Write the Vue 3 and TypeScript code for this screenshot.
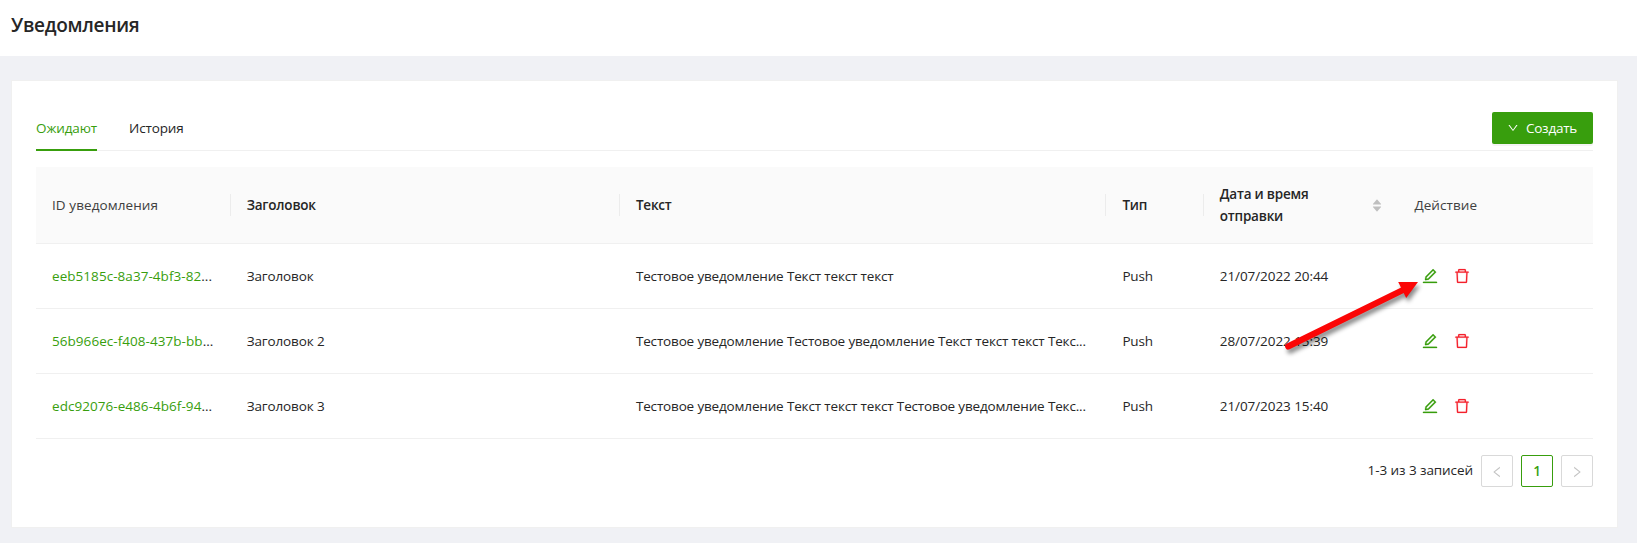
<script setup lang="ts">
interface Notice {
  id: string
  title: string
  text: string
  cut: boolean
  type: string
  date: string
}

const rows: Notice[] = [
  { id: 'eeb5185c-8a37-4bf3-82', title: 'Заголовок', text: 'Тестовое уведомление Текст текст текст', cut: false, type: 'Push', date: '21/07/2022 20:44' },
  { id: '56b966ec-f408-437b-bb', title: 'Заголовок 2', text: 'Тестовое уведомление Тестовое уведомление Текст текст текст Текс', cut: true, type: 'Push', date: '28/07/2022 15:39' },
  { id: 'edc92076-e486-4b6f-94', title: 'Заголовок 3', text: 'Тестовое уведомление Текст текст текст Тестовое уведомление Текс', cut: true, type: 'Push', date: '21/07/2023 15:40' },
]

const icons = {
  edit: 'M257.7 752c2 0 4-.2 6-.5L431.9 722c2-.4 3.9-1.3 5.3-2.8l423.9-423.9a9.96 9.96 0 000-14.1L694.9 114.9c-1.9-1.9-4.4-2.9-7.1-2.9s-5.2 1-7.1 2.9L256.8 538.8c-1.5 1.5-2.4 3.3-2.8 5.3l-29.5 168.2a33.5 33.5 0 009.4 29.8c6.6 6.4 14.9 9.9 23.8 9.9zm67.4-174.4L687.8 215l73.3 73.3-362.7 362.6-88.9 15.7 15.6-89zM880 836H144c-17.7 0-32 14.3-32 32v36c0 4.4 3.6 8 8 8h784c4.4 0 8-3.6 8-8v-36c0-17.7-14.3-32-32-32z',
  trash: 'M360 184h-8c4.4 0 8-3.6 8-8v8h304v-8c0 4.4 3.6 8 8 8h-8v72h72v-80c0-35.3-28.7-64-64-64H352c-35.3 0-64 28.7-64 64v80h72v-72zm504 72H160c-17.7 0-32 14.3-32 32v32c0 4.4 3.6 8 8 8h60.4l24.7 523c1.6 34.1 29.8 61 63.9 61h454c34.2 0 62.3-26.8 63.9-61l24.7-523H888c4.4 0 8-3.6 8-8v-32c0-17.7-14.3-32-32-32zM731.3 840H292.7l-24.2-512h487l-24.2 512z',
  down: 'M884 256h-75c-5.1 0-9.9 2.5-12.9 6.6L512 654.2 227.9 262.6c-3-4.1-7.8-6.6-12.9-6.6h-75c-6.5 0-10.3 7.4-6.5 12.7l352.6 486.1c12.8 17.6 39 17.6 51.7 0l352.6-486.1c3.9-5.3.1-12.7-6.4-12.7z',
  left: 'M724 218.3V141c0-6.7-7.7-10.4-12.9-6.3L260.3 486.8a31.86 31.86 0 000 50.3l450.8 352.1c5.3 4.1 12.9.4 12.9-6.3v-77.3c0-4.9-2.3-9.6-6.1-12.6l-360-281 360-281.1c3.8-3 6.1-7.7 6.1-12.6z',
  right: 'M765.7 486.8L314.9 134.7A7.97 7.97 0 00302 141v77.3c0 4.9 2.3 9.6 6.1 12.6l360 281.1-360 281.1c-3.9 3-6.1 7.7-6.1 12.6V883c0 6.7 7.7 10.4 12.9 6.3l450.8-352.1a31.96 31.96 0 000-50.4z',
  caretUp: 'M858.9 689L530.5 308.2c-9.4-10.9-27.5-10.9-37 0L165.1 689c-12.2 14.2-1.2 35 18.5 35h656.8c19.7 0 30.7-20.8 18.5-35z',
  caretDown: 'M840.4 300H183.6c-19.7 0-30.7 20.8-18.5 35l328.4 380.8c9.4 10.9 27.5 10.9 37 0L858.9 335c12.2-14.2 1.2-35-18.5-35z',
}
</script>

<template>
  <div class="page">
    <header class="page-header"><h1>Уведомления</h1></header>
    <main class="card">
      <nav class="tabs">
        <a class="tab active">Ожидают</a>
        <a class="tab">История</a>
        <button class="create">
          <svg class="icon-down" viewBox="0 0 1024 1024"><path :d="icons.down" /></svg>
          <span>Создать</span>
        </button>
      </nav>

      <section class="table">
        <div class="row head">
          <div class="cell sep soft">ID уведомления</div>
          <div class="cell sep">Заголовок</div>
          <div class="cell sep">Текст</div>
          <div class="cell sep">Тип</div>
          <div class="cell sorter">
            <span>Дата и время<br />отправки</span>
            <span class="carets">
              <svg viewBox="0 0 1024 1024"><path :d="icons.caretUp" /></svg>
              <svg viewBox="0 0 1024 1024"><path :d="icons.caretDown" /></svg>
            </span>
          </div>
          <div class="cell soft">Действие</div>
        </div>
        <div v-for="r in rows" :key="r.id" class="row">
          <div class="cell c-id"><span><a>{{ r.id }}</a>...</span></div>
          <div class="cell c-title">{{ r.title }}</div>
          <div class="cell c-text"><span>{{ r.text }}<template v-if="r.cut">...</template></span></div>
          <div class="cell c-type">{{ r.type }}</div>
          <div class="cell c-date">{{ r.date }}</div>
          <div class="cell actions">
            <svg class="edit" viewBox="0 0 1024 1024"><path :d="icons.edit" /></svg>
            <svg class="trash" viewBox="0 0 1024 1024"><path :d="icons.trash" /></svg>
          </div>
        </div>
      </section>

      <footer class="pager">
        <span class="total">1-3 из 3 записей</span>
        <button class="pg"><svg viewBox="0 0 1024 1024"><path :d="icons.left" /></svg></button>
        <button class="pg current">1</button>
        <button class="pg"><svg viewBox="0 0 1024 1024"><path :d="icons.right" /></svg></button>
      </footer>
    </main>

    <svg class="arrow" viewBox="0 0 150 90">
      <path d="M8.2 66.4L124 9.5" class="shaft" />
      <path d="M118.2 2H138L126.2 18Z" class="tip" />
    </svg>
  </div>
</template>

<style>
body {
  margin: 0;
  background: #f0f1f5;
}
</style>

<style scoped>
* {
  box-sizing: border-box;
}
.page {
  position: relative;
  height: 543px;
  overflow: hidden;
  background: #f0f1f5;
  color: #262626;
  font: 13.5px/22px "Open Sans", "Noto Sans", sans-serif;
  white-space: nowrap;
}
.page-header {
  height: 56px;
  padding: 9px 11px;
  background: #fff;
}
h1 {
  margin: 0;
  font-size: 19px;
  font-weight: 600;
  line-height: 32px;
  letter-spacing: -0.28px;
}
.card {
  width: 1607px;
  height: 448px;
  margin: 24px 0 0 11px;
  padding: 24px;
  padding-top: 23px;
  border: 1px solid #f0f0f0;
  background: #fff;
}
.tabs {
  display: flex;
  height: 47px;
  border-bottom: 1px solid #f0f0f0;
}
.tab {
  height: 47px;
  margin-right: 32px;
  padding-top: 13px;
  color: #262626;
  letter-spacing: -0.12px;
}
.tab.active {
  width: 61px;
  color: #389e0d;
  border-bottom: 2px solid #389e0d;
}
.create {
  display: flex;
  align-items: center;
  gap: 7px;
  width: 101px;
  height: 32px;
  margin: 8px 0 0 auto;
  padding: 0 0 0 15px;
  border: 0;
  border-radius: 2px;
  background: #389e0d;
  box-shadow: 0 2px 0 rgba(0, 0, 0, 0.045);
  color: #fff;
  font: inherit;
  letter-spacing: -0.25px;
}
.icon-down {
  width: 12px;
  height: 12px;
  fill: currentColor;
}
.table {
  margin-top: 16px;
}
.row {
  display: grid;
  grid-template-columns: 2fr 4fr 5fr 1fr 2fr 2fr;
  height: 65px;
  border-bottom: 1px solid #f0f0f0;
}
.head {
  height: 77px;
  background: #fafafa;
  font-weight: 600;
  letter-spacing: -0.2px;
}
.cell {
  display: flex;
  align-items: center;
  min-width: 0;
  padding: 0 16px;
}
.soft {
  color: #404040;
  font-weight: 500;
  letter-spacing: 0.08px;
}
.sep {
  border-right: 1px solid;
  border-image: linear-gradient(transparent 27px, #ececec 27px, #ececec 49px, transparent 49px) 1;
}
.c-id {
  letter-spacing: 0.05px;
}
.c-title {
  letter-spacing: -0.12px;
}
.c-text {
  letter-spacing: -0.157px;
}
.c-type {
  letter-spacing: -0.2px;
}
.c-date {
  letter-spacing: -0.07px;
}
.sorter {
  justify-content: space-between;
}
.carets {
  display: flex;
  flex-direction: column;
  margin-right: -1px;
}
.carets svg {
  width: 12px;
  height: 12px;
  fill: #bfbfbf;
}
.carets svg + svg {
  margin-top: -5px;
}
a {
  color: #389e0d;
}
.actions {
  gap: 14px;
  padding-left: 23px;
}
.actions svg {
  width: 18px;
  height: 18px;
}
.edit {
  fill: #389e0d;
  stroke: #389e0d;
  stroke-width: 14;
}
.trash {
  fill: #f5222d;
  stroke: #f5222d;
  stroke-width: 10;
}
.pager {
  display: flex;
  justify-content: flex-end;
  gap: 8px;
  height: 32px;
  margin-top: 16px;
}
.total {
  line-height: 30px;
  letter-spacing: -0.08px;
}
.pg {
  display: flex;
  align-items: center;
  justify-content: center;
  width: 32px;
  height: 32px;
  padding: 0;
  border: 1px solid #d9d9d9;
  border-radius: 2px;
  background: #fff;
  color: #389e0d;
  font: inherit;
}
.pg svg {
  width: 14px;
  height: 14px;
  margin-top: 2px;
  fill: #c4c4c4;
}
.pg.current {
  border-color: #389e0d;
  font-weight: 600;
}
.arrow {
  position: absolute;
  left: 1280px;
  top: 280px;
  width: 150px;
  height: 90px;
  overflow: visible;
  filter: drop-shadow(2px 4px 2px rgba(0, 0, 0, 0.45));
}
.shaft {
  fill: none;
  stroke: #fb0606;
  stroke-width: 6.2;
  stroke-linecap: round;
}
.tip {
  fill: #fb0606;
}
</style>
